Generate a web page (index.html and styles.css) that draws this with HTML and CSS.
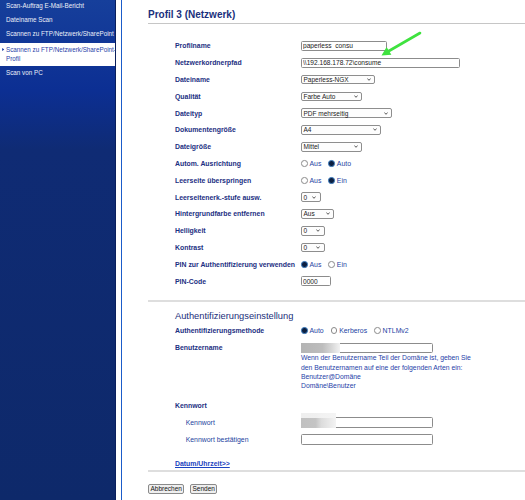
FILE: index.html
```html
<!DOCTYPE html>
<html lang="de">
<head>
    <meta charset="UTF-8">
    <meta name="viewport" content="width=device-width, initial-scale=1.0">
    <title>Profil 3 (Netzwerk)</title>
    <link rel="stylesheet" href="styles.css">
</head>
<body>

    <nav class="sidebar">
        <a class="nav-item" href="#">Scan-Auftrag E-Mail-Bericht</a>
        <a class="nav-item" href="#">Dateiname Scan</a>
        <a class="nav-item" href="#">Scannen zu FTP/Netzwerk/SharePoint</a>
        <a class="nav-item active" href="#">
            <svg class="nav-bullet" viewBox="0 0 3 4"><polygon points="0,0 3,2 0,4" fill="#1d3fa8"/></svg>
            <span>Scannen zu FTP/Netzwerk/SharePoint-<br>Profil</span>
        </a>
        <a class="nav-item" href="#">Scan von PC</a>
    </nav>
    <div class="divider"></div>

    <main class="content">
        <h1 class="page-title">Profil 3 (Netzwerk)</h1>

        <!-- Hinweispfeil auf den Netzwerkpfad -->
        <svg class="marker-arrow" width="50" height="32" viewBox="0 0 50 32">
            <line x1="42" y1="5" x2="10.9" y2="23" stroke="#3fe23f" stroke-width="2.6" stroke-linecap="round"/>
            <polygon points="3.5,27.5 13.4,26.7 8.6,18.9" fill="#3fe23f"/>
        </svg>

        <div class="form-grid main-form">
            <div class="field-label">Profilname</div>
            <div class="field"><input class="text-input w-profile" value="paperless_consu"></div>

            <div class="field-label">Netzwerkordnerpfad</div>
            <div class="field"><input class="text-input w-path" value="\\192.168.178.72\consume"></div>

            <div class="field-label">Dateiname</div>
            <div class="field"><div class="select w-74"><span>Paperless-NGX</span><svg viewBox="0 0 4 3"><polyline points="0.4,0.5 2,2.3 3.6,0.5" fill="none" stroke="#333" stroke-width="0.8"/></svg></div></div>

            <div class="field-label">Qualität</div>
            <div class="field"><div class="select w-61"><span>Farbe Auto</span><svg viewBox="0 0 4 3"><polyline points="0.4,0.5 2,2.3 3.6,0.5" fill="none" stroke="#333" stroke-width="0.8"/></svg></div></div>

            <div class="field-label">Dateityp</div>
            <div class="field"><div class="select w-91"><span>PDF mehrseitig</span><svg viewBox="0 0 4 3"><polyline points="0.4,0.5 2,2.3 3.6,0.5" fill="none" stroke="#333" stroke-width="0.8"/></svg></div></div>

            <div class="field-label">Dokumentengröße</div>
            <div class="field"><div class="select w-80"><span>A4</span><svg viewBox="0 0 4 3"><polyline points="0.4,0.5 2,2.3 3.6,0.5" fill="none" stroke="#333" stroke-width="0.8"/></svg></div></div>

            <div class="field-label">Dateigröße</div>
            <div class="field"><div class="select w-61"><span>Mittel</span><svg viewBox="0 0 4 3"><polyline points="0.4,0.5 2,2.3 3.6,0.5" fill="none" stroke="#333" stroke-width="0.8"/></svg></div></div>

            <div class="field-label">Autom. Ausrichtung</div>
            <div class="field radio-group">
                <label><input type="radio" name="ausrichtung">Aus</label>
                <label><input type="radio" name="ausrichtung" checked>Auto</label>
            </div>

            <div class="field-label">Leerseite überspringen</div>
            <div class="field radio-group">
                <label><input type="radio" name="leerseite">Aus</label>
                <label><input type="radio" name="leerseite" checked>Ein</label>
            </div>

            <div class="field-label">Leerseitenerk.-stufe ausw.</div>
            <div class="field"><div class="select w-20"><span>0</span><svg viewBox="0 0 4 3"><polyline points="0.4,0.5 2,2.3 3.6,0.5" fill="none" stroke="#333" stroke-width="0.8"/></svg></div></div>

            <div class="field-label">Hintergrundfarbe entfernen</div>
            <div class="field"><div class="select w-33"><span>Aus</span><svg viewBox="0 0 4 3"><polyline points="0.4,0.5 2,2.3 3.6,0.5" fill="none" stroke="#333" stroke-width="0.8"/></svg></div></div>

            <div class="field-label">Helligkeit</div>
            <div class="field"><div class="select w-24"><span>0</span><svg viewBox="0 0 4 3"><polyline points="0.4,0.5 2,2.3 3.6,0.5" fill="none" stroke="#333" stroke-width="0.8"/></svg></div></div>

            <div class="field-label">Kontrast</div>
            <div class="field"><div class="select w-24"><span>0</span><svg viewBox="0 0 4 3"><polyline points="0.4,0.5 2,2.3 3.6,0.5" fill="none" stroke="#333" stroke-width="0.8"/></svg></div></div>

            <div class="field-label">PIN zur Authentifizierung verwenden</div>
            <div class="field radio-group">
                <label><input type="radio" name="pin" checked>Aus</label>
                <label><input type="radio" name="pin">Ein</label>
            </div>

            <div class="field-label">PIN-Code</div>
            <div class="field"><input class="text-input w-pin" value="0000"></div>
        </div>

        <hr class="rule rule-auth">

        <h2 class="section-title">Authentifizierungseinstellung</h2>

        <div class="form-grid auth-form">
            <div class="field-label">Authentifizierungsmethode</div>
            <div class="field radio-group">
                <label><input type="radio" name="methode" checked>Auto</label>
                <label><input type="radio" name="methode">Kerberos</label>
                <label><input type="radio" name="methode">NTLMv2</label>
            </div>
        </div>

        <div class="user-row">
            <div class="field-label user-label">Benutzername</div>
            <div class="user-value">
                <div class="masked">
                    <input class="text-input w-wide" value="">
                    <span class="smudge smudge-user"></span>
                </div>
                <p class="help-text">Wenn der Benutzername Teil der Domäne ist, geben Sie<br>den Benutzernamen auf eine der folgenden Arten ein:<br>Benutzer@Domäne<br>Domäne\Benutzer</p>
            </div>
        </div>

        <div class="form-grid password-form">
            <div class="field-label full-row">Kennwort</div>

            <div class="sub-label">Kennwort</div>
            <div class="field">
                <div class="masked">
                    <input class="text-input w-wide" type="password" value="">
                    <span class="smudge smudge-pass"></span>
                </div>
            </div>

            <div class="sub-label">Kennwort bestätigen</div>
            <div class="field"><input class="text-input w-wide" type="password" value=""></div>
        </div>

        <div class="link-row"><a href="#">Datum/Uhrzeit&gt;&gt;</a></div>

        <hr class="rule rule-bottom">

        <div class="buttons">
            <button>Abbrechen</button>
            <button>Senden</button>
        </div>
    </main>

</body>
</html>
```

FILE: styles.css
```css
body {
    display: flex;
    margin: 0;
    height: 100vh;
    overflow: hidden;
    background: #fff;
    font-family: "Liberation Sans", Arial, sans-serif;
}

/* linke Navigation */
.sidebar {
    width: 115px;
    flex-shrink: 0;
    display: flex;
    flex-direction: column;
    border-right: 1px solid #0a1f5c;
    background: linear-gradient(#163f9b 0, #0c2f93 90px, #0f2b74 150px, #0e296a 100%);
}

.nav-item {
    display: block;
    height: 14.3px;
    line-height: 14.3px;
    padding-left: 6px;
    font-size: 6.3px;
    color: #eceff8;
    text-decoration: none;
    white-space: nowrap;
}

.nav-item:first-child {
    margin-top: -1.2px;
}

.nav-item.active {
    display: flex;
    align-items: flex-start;
    height: auto;
    margin-top: 1.6px;
    padding: 1.9px 0 1.9px 1.5px;
    line-height: 9.3px;
    background: #fff;
    color: #1f3fa8;
}

.nav-bullet {
    width: 2.5px;
    height: 3px;
    margin: 3.2px 2px 0 0;
    flex-shrink: 0;
}

.divider {
    width: 1px;
    margin-left: 5px;
    flex-shrink: 0;
    background: #1b5cc9;
}

/* Inhalt */
.content {
    position: relative;
    flex: 1;
    min-width: 0;
    padding-top: 9px;
    padding-left: 26px;
}

.page-title {
    margin: 0;
    padding-bottom: 2px;
    font-size: 10px;
    line-height: 12px;
    font-weight: bold;
    color: #1a2f7c;
    border-bottom: 1px solid #c6c6c6;
}

.marker-arrow {
    position: absolute;
    left: 256px;
    top: 28px;
}

.form-grid {
    display: grid;
    grid-template-columns: 126px 1fr;
    grid-auto-rows: 16.8px;
    align-items: center;
    margin-left: 27px;
}

.main-form {
    margin-top: 13.6px;
}

.field-label {
    font-size: 6.9px;
    font-weight: bold;
    color: #1c2f82;
    white-space: nowrap;
}

.field {
    display: flex;
    align-items: center;
}

.text-input {
    box-sizing: border-box;
    height: 10.5px;
    margin: 0;
    padding: 0 1px;
    font-family: "Liberation Sans", Arial, sans-serif;
    font-size: 6.6px;
    line-height: 8.5px;
    color: #222;
    background: #fff;
    border: 1px solid #8c8c8c;
    border-radius: 1.5px;
    outline: none;
}

.w-profile { width: 85.5px; }
.w-path { width: 159px; }
.w-pin { width: 30px; }
.w-wide { width: 131.5px; }

.select {
    box-sizing: border-box;
    height: 9.5px;
    display: flex;
    align-items: center;
    justify-content: space-between;
    padding: 0 3.5px 0 1.5px;
    font-size: 6.5px;
    color: #222;
    background: #fdfdfd;
    border: 1px solid #8e8e8e;
    border-radius: 2px;
}

.select svg {
    width: 4px;
    height: 3px;
    flex-shrink: 0;
}

.w-20 { width: 19.5px; }
.w-24 { width: 23.5px; }
.w-33 { width: 33px; }
.w-61 { width: 61px; }
.w-74 { width: 74px; }
.w-80 { width: 80px; }
.w-91 { width: 91px; }

.radio-group {
    font-size: 6.9px;
    color: #2443a3;
}

.radio-group label {
    display: flex;
    align-items: center;
    margin-right: 7px;
}

.radio-group input {
    appearance: none;
    box-sizing: border-box;
    width: 6.7px;
    height: 6.7px;
    margin: 0 1.8px 0 0;
    border: 0.8px solid #8a8a8a;
    border-radius: 50%;
    background: #fff;
}

.radio-group input:checked {
    border: 1px solid #3a7cc0;
    background: #0c1f40;
}

.rule {
    height: 2px;
    margin: 0;
    border: 0;
    background: #dedede;
}

.rule-auth {
    margin-top: 10px;
}

.section-title {
    margin: 9.6px 0 0 27px;
    font-size: 9.3px;
    line-height: 11px;
    font-weight: normal;
    color: #1b2e7a;
}

.auth-form {
    margin-top: 0;
}

.user-row {
    display: grid;
    grid-template-columns: 126px 1fr;
    margin-left: 27px;
}

.user-label {
    padding-top: 4px;
    line-height: 10px;
}

.user-value {
    padding-top: 4px;
}

.masked {
    position: relative;
    display: flex;
    width: fit-content;
}

.smudge {
    position: absolute;
    left: 0;
}

.smudge-user {
    top: 0;
    width: 39px;
    height: 10.5px;
    background: linear-gradient(90deg, #b4b4b4 0, #bdbdbd 55%, #d6d6d6 78%, #f2f2f2 100%);
    filter: blur(0.6px);
}

.smudge-pass {
    top: -4px;
    width: 35px;
    height: 15px;
    background:
        linear-gradient(180deg, rgba(244, 244, 244, 0.9) 0, rgba(244, 244, 244, 0.9) 32%, transparent 32%),
        linear-gradient(90deg, #c0c0c0 0, #c4c4c4 42%, #dcdcdc 58%, #f3f3f3 100%);
    filter: blur(0.5px);
}

.help-text {
    margin: 0;
    font-size: 6.8px;
    line-height: 9.33px;
    color: #1f41a8;
    white-space: nowrap;
}

.password-form {
    margin-top: 6.6px;
}

.full-row {
    grid-column: 1 / 3;
}

.sub-label {
    padding-left: 10.7px;
    font-size: 6.9px;
    color: #233f9e;
    white-space: nowrap;
}

.link-row {
    margin: 5.5px 0 0 27px;
    height: 16.8px;
    line-height: 16.8px;
}

.link-row a {
    font-size: 6.9px;
    font-weight: bold;
    color: #1b43c0;
}

.rule-bottom {
    margin-top: 0.3px;
}

.buttons {
    display: flex;
    gap: 5.5px;
    margin-top: 12px;
}

.buttons button {
    box-sizing: border-box;
    height: 10px;
    margin: 0;
    padding: 0 1.5px;
    font-family: "Liberation Sans", Arial, sans-serif;
    font-size: 6.5px;
    line-height: 8px;
    color: #111;
    background: #efefef;
    border: 1px solid #8a8a8a;
    border-radius: 2px;
}
```
